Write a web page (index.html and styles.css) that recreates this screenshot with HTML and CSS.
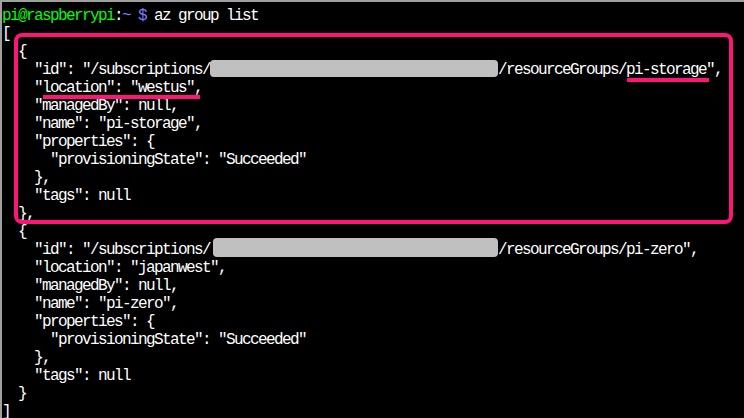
FILE: index.html
```html
<!DOCTYPE html>
<html>
<head>
<meta charset="utf-8">
<link rel="stylesheet" href="styles.css">
</head>
<body>
<div class="term">
<pre class="screen"><span class="user">pi@raspberrypi</span>:<span class="path">~</span> <span class="path">$</span> az group list
[
  {
    "id": "/subscriptions/<span class="redact"></span>/resourceGroups/pi-storage",
    "location": "westus",
    "managedBy": null,
    "name": "pi-storage",
    "properties": {
      "provisioningState": "Succeeded"
    },
    "tags": null
  },
  {
    "id": "/subscriptions/<span class="redact redact-b"></span>/resourceGroups/pi-zero",
    "location": "japanwest",
    "managedBy": null,
    "name": "pi-zero",
    "properties": {
      "provisioningState": "Succeeded"
    },
    "tags": null
  }
]</pre>
<div class="highlight"></div>
<div class="mark mark-location"></div>
<div class="mark mark-name"></div>
</div>
</body>
</html>
```

FILE: styles.css
```css
html, body {
  margin: 0;
  padding: 0;
  background: #000;
  overflow: hidden;
}

.term {
  position: relative;
  width: 744px;
  height: 418px;
  box-sizing: border-box;
  border-top: 2px solid #a0a0a0;
  border-left: 2px solid #a0a0a0;
  background: #000;
  overflow: hidden;
}

.screen {
  margin: 0;
  padding: 5px 0 0 0;
  font-family: "Liberation Mono", "DejaVu Sans Mono", monospace;
  font-size: 16px;
  letter-spacing: -1.6px;
  line-height: 18px;
  color: #ffffff;
  white-space: pre;
}

.user {
  color: #00ff00;
}

.path {
  color: #8080ff;
}

.redact {
  display: inline-block;
  width: 288px;
  height: 17px;
  margin-top: -1px;
  vertical-align: top;
  background: #c0c0c0;
  border-radius: 4px;
}

.redact-b {
  width: 285px;
  height: 19px;
  margin-top: -3px;
  margin-left: 3px;
}

.highlight {
  position: absolute;
  left: 12px;
  top: 31px;
  width: 711px;
  height: 183px;
  border: 4px solid #ff1478;
  border-radius: 8px;
}

.mark {
  position: absolute;
  height: 4px;
  background: #ff1478;
}

.mark-location {
  left: 41px;
  top: 93px;
  width: 157px;
}

.mark-name {
  left: 625px;
  top: 76px;
  width: 82px;
}
```
